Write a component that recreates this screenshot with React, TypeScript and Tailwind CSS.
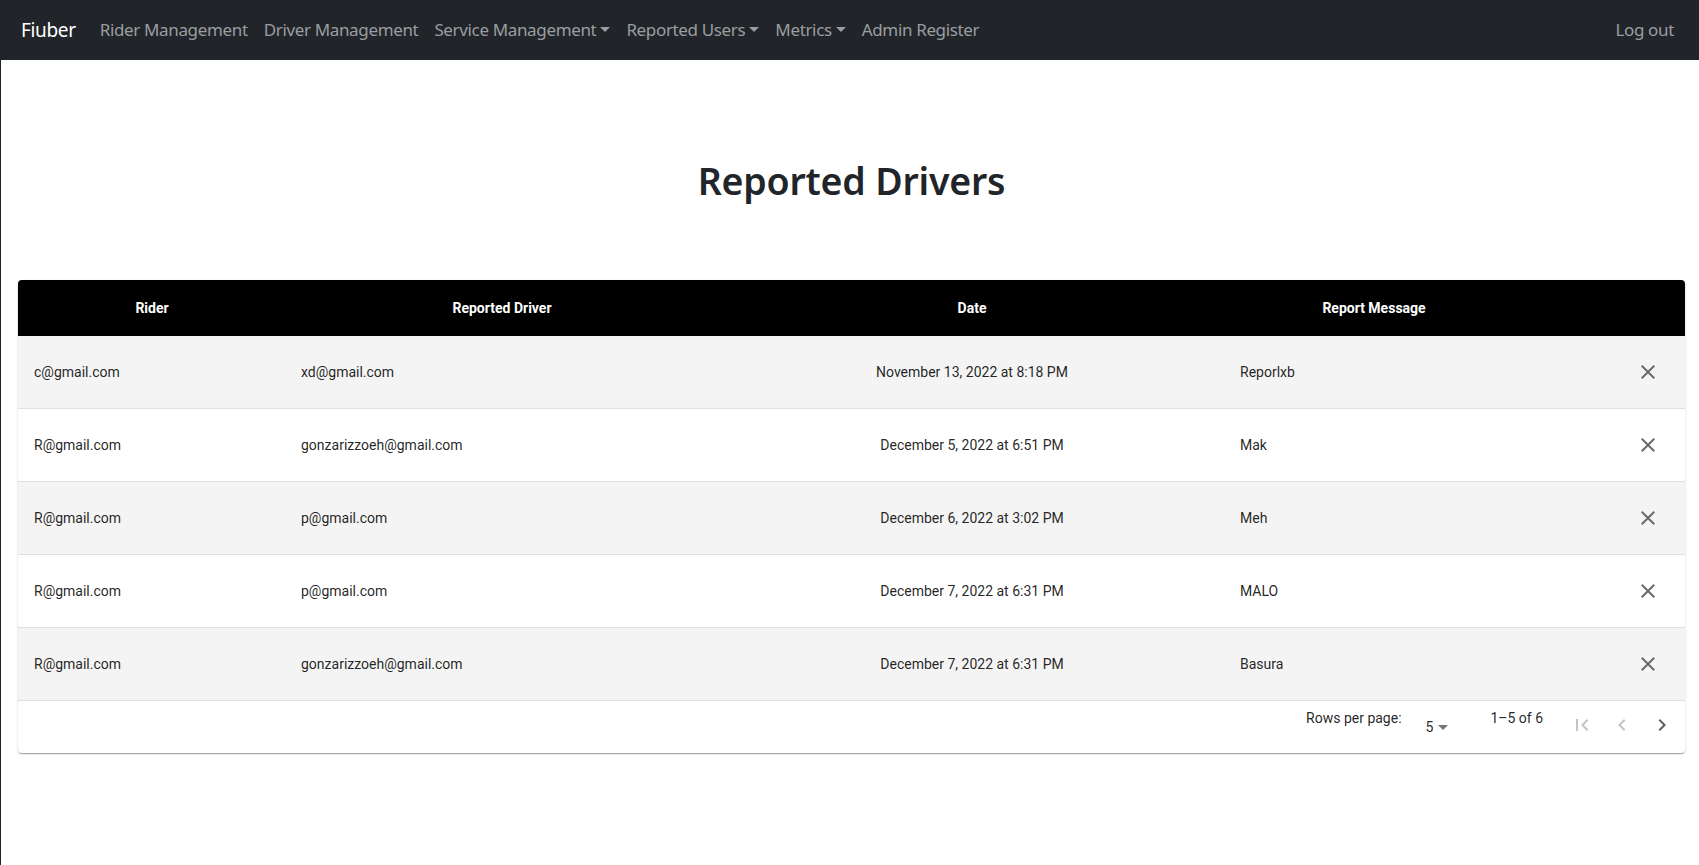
import React from "react";

const rows = [
  { rider: "c@gmail.com", driver: "xd@gmail.com", date: "November 13, 2022 at 8:18 PM", msg: "Reporlxb" },
  { rider: "R@gmail.com", driver: "gonzarizzoeh@gmail.com", date: "December 5, 2022 at 6:51 PM", msg: "Mak" },
  { rider: "R@gmail.com", driver: "p@gmail.com", date: "December 6, 2022 at 3:02 PM", msg: "Meh" },
  { rider: "R@gmail.com", driver: "p@gmail.com", date: "December 7, 2022 at 6:31 PM", msg: "MALO" },
  { rider: "R@gmail.com", driver: "gonzarizzoeh@gmail.com", date: "December 7, 2022 at 6:31 PM", msg: "Basura" },
];

const Caret = () => (
  <span className="ml-[4px] inline-block w-0 h-0 border-l-[5px] border-r-[5px] border-t-[5px] border-l-transparent border-r-transparent border-t-[#9a9da0] align-middle relative top-[-2px]" />
);

const CloseIcon = () => (
  <svg width="24" height="24" viewBox="0 0 24 24" fill="#6b6b6b">
    <path d="M19 6.41 17.59 5 12 10.59 6.41 5 5 6.41 10.59 12 5 17.59 6.41 19 12 13.41 17.59 19 19 17.59 13.41 12z" />
  </svg>
);

const FirstIcon = ({ color }: { color: string }) => (
  <svg width="24" height="24" viewBox="0 0 24 24" fill={color}>
    <path d="M18.41 16.59 13.82 12l4.59-4.59L17 6l-6 6 6 6zM6 6h2v12H6z" />
  </svg>
);
const PrevIcon = ({ color }: { color: string }) => (
  <svg width="24" height="24" viewBox="0 0 24 24" fill={color}>
    <path d="M15.41 7.41 14 6l-6 6 6 6 1.41-1.41L10.83 12z" />
  </svg>
);
const NextIcon = ({ color }: { color: string }) => (
  <svg width="24" height="24" viewBox="0 0 24 24" fill={color}>
    <path d="M10 6 8.59 7.41 13.17 12l-4.58 4.59L10 18l6-6z" />
  </svg>
);

export default function App() {
  const cols = "grid grid-cols-[268px_432px_508px_296px_1fr]";
  return (
    <div className="min-h-[865px] bg-white font-['Roboto',sans-serif]">
      <nav className="h-[60px] bg-[#212529] flex items-center px-[21px] font-['Noto_Sans',sans-serif] text-[17px] tracking-[-0.35px]">
        <span className="text-white text-[19px] mr-[24px]">Fiuber</span>
        <div className="flex items-center gap-[16px] text-[#9a9da0]">
          <span>Rider Management</span>
          <span>Driver Management</span>
          <span>Service Management<Caret /></span>
          <span>Reported Users<Caret /></span>
          <span>Metrics<Caret /></span>
          <span>Admin Register</span>
        </div>
        <span className="ml-auto mr-[4px] text-[#9a9da0]">Log out</span>
      </nav>
      <div className="border-l border-[#212529] min-h-[805px] pl-[17px] pr-[14px]">
        <h1 className="pt-[96px] pb-[74px] text-center text-[#212529] text-[37.5px] font-semibold leading-[50px] font-['Noto_Sans',sans-serif] tracking-[-0.2px]">
          Reported Drivers
        </h1>
        <div className="rounded-[4px] shadow-[0_2px_1px_-1px_rgba(0,0,0,0.2),0_1px_1px_0_rgba(0,0,0,0.14),0_1px_3px_0_rgba(0,0,0,0.12)] bg-white overflow-hidden">
          <div className={`${cols} h-[56px] bg-black text-white text-[14px] font-bold items-center`}>
            <div className="text-center">Rider</div>
            <div className="text-center">Reported Driver</div>
            <div className="text-center">Date</div>
            <div className="text-center">Report Message</div>
            <div />
          </div>
          {rows.map((r, i) => (
            <div
              key={i}
              className={`${cols} h-[73px] items-center text-[14px] text-[rgba(0,0,0,0.87)] border-b border-[#e0e0e0] ${i % 2 === 0 ? "bg-[#f4f4f4]" : "bg-white"}`}
            >
              <div className="pl-[16px]">{r.rider}</div>
              <div className="pl-[15px]">{r.driver}</div>
              <div className="text-center">{r.date}</div>
              <div className="pl-[14px]">{r.msg}</div>
              <div className="flex justify-end pr-[25px]">
                <CloseIcon />
              </div>
            </div>
          ))}
          <div className="h-[52px] flex items-start text-[14px] text-[rgba(0,0,0,0.87)]">
            <div className="ml-auto flex items-start">
              <span className="mt-[7px]">Rows per page:</span>
              <span className="ml-[24px] mt-[14px] flex items-center">
                5
                <svg width="24" height="24" viewBox="0 0 24 24" fill="#757575" className="-ml-[2px]">
                  <path d="M7 10l5 5 5-5z" />
                </svg>
              </span>
              <span className="ml-[35px] mt-[7px]">1–5 of 6</span>
              <div className="ml-[27px] mt-[12px] flex items-center gap-[16px] mr-[11px]">
                <FirstIcon color="#c4c4c4" />
                <PrevIcon color="#c4c4c4" />
                <NextIcon color="#5f5f5f" />
              </div>
            </div>
          </div>
        </div>
      </div>
    </div>
  );
}
